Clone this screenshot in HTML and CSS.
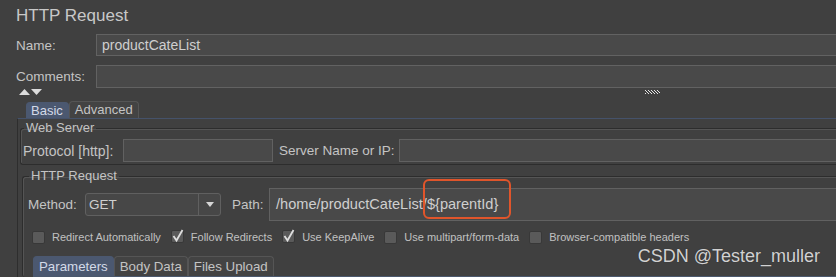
FILE: index.html
```html
<!DOCTYPE html>
<html lang="en">
<head>
    <meta charset="UTF-8">
    <title>HTTP Request</title>
    <link rel="stylesheet" href="styles.css">
</head>
<body>
    <div class="page-title">HTTP Request</div>

    <div class="form-row">
        <label>Name:</label>
        <div class="text-field">productCateList</div>
    </div>
    <div class="form-row comments-row">
        <label>Comments:</label>
        <div class="text-field"></div>
    </div>

    <!-- toggle arrows + splitter grip -->
    <div class="toggle-row">
        <svg class="arrows" width="24" height="7" viewBox="0 0 24 7">
            <polygon points="0,6 5.5,0 11,6" fill="#dcdcdc"/>
            <polygon points="12,0 23,0 17.5,6" fill="#dcdcdc"/>
        </svg>
        <svg class="grip" width="15" height="5" viewBox="0 0 15 5">
            <path d="M0 0h1v1h-1zM3 0h1v1h-1zM6 0h1v1h-1zM9 0h1v1h-1zM12 0h1v1h-1zM1 1h1v1h-1zM4 1h1v1h-1zM7 1h1v1h-1zM10 1h1v1h-1zM13 1h1v1h-1zM2 2h1v1h-1zM5 2h1v1h-1zM8 2h1v1h-1zM11 2h1v1h-1zM14 2h1v1h-1zM0 3h1v1h-1zM3 3h1v1h-1zM6 3h1v1h-1zM9 3h1v1h-1zM12 3h1v1h-1z" fill="#e6e6e6"/>
        </svg>
    </div>

    <div class="tabs">
        <span class="tab active">Basic</span>
        <span class="tab">Advanced</span>
    </div>

    <div class="panel">
        <fieldset class="group">
            <legend>Web Server</legend>
            <div class="group-row">
                <label class="lbl-protocol">Protocol [http]:</label>
                <div class="input protocol-input"></div>
                <label class="lbl-server">Server Name or IP:</label>
                <div class="input grow"></div>
            </div>
        </fieldset>

        <fieldset class="group http-group">
            <legend>HTTP Request</legend>
            <div class="method-row">
                <label class="lbl-method">Method:</label>
                <div class="combo">
                    <span class="combo-value">GET</span>
                    <span class="combo-arrow">
                        <svg width="8" height="5" viewBox="0 0 8 5"><polygon points="0,0 8,0 4,5" fill="#d6d6d6"/></svg>
                    </span>
                </div>
                <label class="lbl-path">Path:</label>
                <div class="input path-input">/home/productCateList/<span class="mark">${parentId}</span></div>
            </div>

            <div class="check-row">
                <span class="check"><span class="box"></span>Redirect Automatically</span>
                <span class="check"><svg class="box-svg" width="16" height="16" viewBox="0 0 16 16"><rect x="0.5" y="2.5" width="12" height="12" rx="1.5" fill="#5a5a5a" stroke="#383838"/><polyline points="2.5,8 5.5,12.5 11.5,2" fill="none" stroke="#dedede" stroke-width="1.8"/></svg>Follow Redirects</span>
                <span class="check"><svg class="box-svg" width="16" height="16" viewBox="0 0 16 16"><rect x="0.5" y="2.5" width="12" height="12" rx="1.5" fill="#5a5a5a" stroke="#383838"/><polyline points="2.5,8 5.5,12.5 11.5,2" fill="none" stroke="#dedede" stroke-width="1.8"/></svg>Use KeepAlive</span>
                <span class="check"><span class="box"></span>Use multipart/form-data</span>
                <span class="check"><span class="box"></span>Browser-compatible headers</span>
            </div>

            <div class="sub-tabs">
                <span class="sub-tab active">Parameters</span>
                <span class="sub-tab">Body Data</span>
                <span class="sub-tab">Files Upload</span>
            </div>
        </fieldset>
    </div>

    <div class="watermark">CSDN @Tester_muller</div>
</body>
</html>
```

FILE: styles.css
```css
/* JMeter dark look */

body {
    margin: 0;
    width: 836px;
    height: 277px;
    overflow: hidden;
    position: relative;
    background-color: #404040;
    font-family: "Liberation Sans", Arial, sans-serif;
    color: #c4c4c4;
}
.page-title {
    font-size: 17px;
    line-height: 20px;
    padding: 6px 0 0 16px;
    color: #c8c8c8;
}
.form-row {
    display: flex;
    align-items: center;
    margin-top: 8px;
    padding-left: 16px;
}
.form-row label {
    width: 80px;
    font-size: 13.5px;
}
.text-field {
    flex: 1;
    height: 22px;
    box-sizing: border-box;
    background-color: #494949;
    border: 1px solid #626262;
    border-right: none;
    padding-left: 5px;
    font-size: 14px;
    line-height: 20px;
    color: #cfcfcf;
}
.comments-row {
    margin-top: 9px;
}
.comments-row .text-field {
    height: 23px;
}
.toggle-row {
    height: 13px;
    display: flex;
    align-items: flex-start;
}
.arrows {
    margin: 1px 0 0 19px;
}
.grip {
    margin: 2px 0 0 602px;
}
.tabs {
    display: flex;
    align-items: flex-end;
    height: 17px;
    padding-left: 26px;
}
.tab {
    font-size: 13px;
    line-height: 16px;
    padding: 0 5px;
    border: 1px solid #555555;
    border-bottom: none;
    border-radius: 4px 4px 0 0;
    background-color: #434343;
}
.tab.active {
    padding: 0 5px 0 4px;
    height: 15px;
    line-height: 15px;
    background-color: #4b5870;
    border-color: #4b5870;
    color: #d3dae8;
}
.panel {
    margin-left: 17px;
    border-top: 1px solid #45526a;
    border-left: 1px solid #2e2e2e;
    padding: 1px 0 0 2px;
}
.group {
    margin: 0;
    padding: 3px 0 2px 2px;
    border: 1px solid #2d2d2d;
    border-right: none;
    border-radius: 3px 0 0 3px;
    box-shadow: inset 1px 1px 0 #555555;
    min-width: 0;
}
.group legend {
    font-size: 13px;
    line-height: 16px;
    padding: 0 2px;
    margin-left: 1px;
    color: #c4c4c4;
}
.group-row {
    display: flex;
    align-items: center;
    height: 23px;
}
.input {
    box-sizing: border-box;
    background-color: #494949;
    border: 1px solid #616161;
    height: 23px;
}
.lbl-protocol {
    font-size: 14px;
    width: 100px;
}
.protocol-input {
    width: 150px;
}
.lbl-server {
    font-size: 13.5px;
    width: 120px;
    margin-left: 6px;
}
.grow {
    flex: 1;
    border-right: none;
}
.http-group {
    margin: 3px 0 0 2px;
    padding: 4px 0 0 5px;
    border-bottom: none;
}
.method-row {
    display: flex;
    align-items: center;
    height: 33px;
}
.lbl-method {
    font-size: 13.5px;
    width: 57px;
}
.combo {
    width: 136px;
    height: 23px;
    box-sizing: border-box;
    display: flex;
    border: 1px solid #606060;
    border-radius: 3px;
    background-color: #474747;
}
.combo-value {
    flex: 1;
    padding-left: 3px;
    font-size: 13.5px;
    line-height: 21px;
    color: #cfcfcf;
}
.combo-arrow {
    width: 21px;
    border-left: 1px solid #606060;
    display: flex;
    align-items: center;
    justify-content: center;
}
.lbl-path {
    font-size: 13.5px;
    width: 37px;
    margin-left: 11px;
}
.path-input {
    flex: 1;
    height: 33px;
    border-right: none;
    padding-left: 6px;
    font-size: 14.6px;
    line-height: 31px;
    color: #cfcfcf;
}
.mark {
    position: relative;
}
.mark::after {
    content: "";
    position: absolute;
    left: -4px;
    right: -13px;
    top: -17px;
    bottom: -7px;
    border: 2px solid #e0552b;
    border-radius: 6px;
}
.check-row {
    display: flex;
    align-items: center;
    margin-top: 9px;
    height: 14px;
    padding-left: 4px;
    font-size: 11px;
    color: #c0c0c0;
}
.check {
    display: flex;
    align-items: center;
    margin-right: 10px;
}
.box {
    width: 13px;
    height: 13px;
    box-sizing: border-box;
    border: 1px solid #383838;
    border-radius: 2px;
    background-color: #5a5a5a;
    margin-right: 7px;
}
.box-svg {
    margin: -3px 4px 0 0;
}
.sub-tabs {
    display: flex;
    margin-top: 12px;
    margin-left: 5px;
    height: 20px;
    border-bottom: 1px solid #4b586d;
}
.sub-tab {
    font-size: 13.3px;
    line-height: 19px;
    padding: 0 5px;
    border: 1px solid #555555;
    border-bottom: none;
    border-radius: 4px 4px 0 0;
    background-color: #434343;
}
.sub-tab.active {
    background-color: #4b5870;
    border-color: #4b5870;
    color: #d3dae8;
}
.watermark {
    position: absolute;
    right: 16px;
    top: 246px;
    font-size: 18px;
    color: #d2d2d2;
    text-shadow: 0 0 1px #2a2a2a;
}
```
